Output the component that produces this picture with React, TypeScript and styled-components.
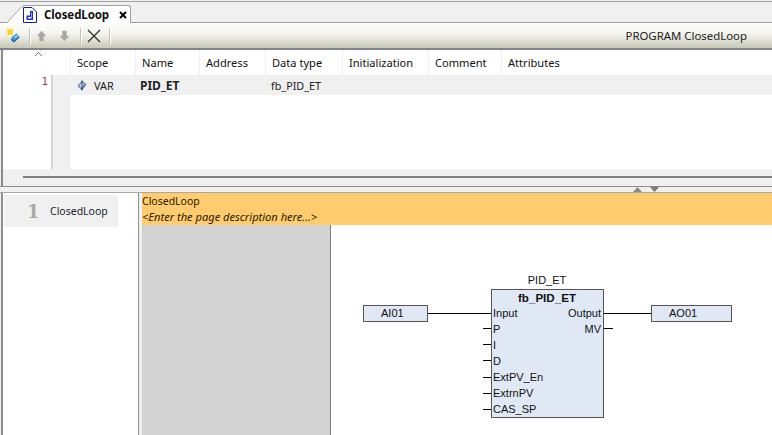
import React from "react";
import styled, { createGlobalStyle } from "styled-components";

const uiFont = `"Noto Sans", "DejaVu Sans", sans-serif`;
const fbdFont = `"Liberation Sans", Arial, sans-serif`;

const GlobalStyle = createGlobalStyle`
  html, body {
    margin: 0;
    padding: 0;
    background: #f0f0f0;
  }
  * {
    box-sizing: border-box;
  }
`;

const columns = [
  { label: "Scope", width: 65 },
  { label: "Name", width: 64 },
  { label: "Address", width: 66 },
  { label: "Data type", width: 77 },
  { label: "Initialization", width: 86 },
  { label: "Comment", width: 73 },
  { label: "Attributes", width: 271 },
];

const inputs = ["Input", "P", "I", "D", "ExtPV_En", "ExtrnPV", "CAS_SP"];
const outputs = ["Output", "MV"];

const Page = styled.div`
  width: 772px;
  height: 435px;
  display: flex;
  flex-direction: column;
  overflow: hidden;
  background: #f0f0f0;
  font-family: ${uiFont};
  font-size: 11.1px;
  color: #111;
`;

const TabStrip = styled.div`
  height: 22px;
  margin-top: 1px;
  padding-left: 7px;
  display: flex;
  align-items: flex-end;
  border-top: 1px solid #a0a0a0;
  border-bottom: 1px solid #a0a0a0;
  background: #f0f0f0;
`;

const TabSlant = styled.svg`
  display: block;
  margin-bottom: -1px;
`;

const Tab = styled.div`
  width: 108px;
  height: 18px;
  margin-bottom: -1px;
  display: flex;
  align-items: center;
  background: #fff;
  border-top: 1px solid #a0a0a0;
  border-right: 1px solid #a0a0a0;
  border-top-right-radius: 3px;
`;

const TabIcon = styled.svg`
  display: block;
  flex: none;
`;

const TabTitle = styled.span`
  margin-left: 7px;
  font-size: 11.5px;
  font-weight: 700;
  letter-spacing: -0.1px;
`;

const TabClose = styled.svg`
  margin-left: 10px;
`;

const Toolbar = styled.div`
  height: 27px;
  padding: 0 25px 0 6px;
  display: flex;
  align-items: center;
  background: linear-gradient(#fdfdfb 0%, #f3f3ee 45%, #c8c8b6 100%);
  border-bottom: 2px solid #82828e;
`;

const ToolIcon = styled.svg<{ $gap?: number }>`
  display: block;
  flex: none;
  margin-left: ${(p) => p.$gap ?? 0}px;
`;

const ToolSeparator = styled.div<{ $gap: number }>`
  width: 2px;
  height: 16px;
  margin-left: ${(p) => p.$gap}px;
  background: #c4c4b6;
  border-right: 1px solid #fff;
`;

const PouTitle = styled.span`
  margin-left: auto;
  font-size: 11.4px;
  color: #222;
`;

const Declaration = styled.div`
  height: 119px;
  display: flex;
  flex-direction: column;
  margin-left: 1px;
  border-left: 2px solid #8c8c8c;
  background: #fff;
`;

const HeaderRow = styled.div`
  height: 25px;
  padding-left: 67px;
  display: flex;
  position: relative;
`;

const SortMark = styled.svg`
  position: absolute;
  left: 31px;
  top: 1px;
`;

const HeaderCell = styled.div<{ $width: number }>`
  width: ${(p) => p.$width}px;
  flex: none;
  padding-left: 6px;
  display: flex;
  align-items: center;
  border-left: 1px solid #efefef;
  white-space: nowrap;
`;

const Body = styled.div`
  flex: 1;
  display: flex;
`;

const LineNumbers = styled.div`
  width: 48px;
  padding-top: 1px;
  padding-right: 3px;
  text-align: right;
  color: #a03050;
  font-family: "DejaVu Sans", sans-serif;
  font-size: 10px;
  line-height: 12px;
`;

const Rule = styled.div`
  width: 2px;
  background: #d4d4d4;
`;

const Rows = styled.div`
  flex: 1;
  display: flex;
  flex-direction: column;
`;

const DataRow = styled.div`
  height: 20px;
  display: flex;
  align-items: center;
  background: #f0f0f0;
`;

const Stripe = styled.div`
  flex: 1;
  width: 17px;
  background: #f0f0f0;
`;

const RowGutter = styled.div`
  width: 17px;
  flex: none;
`;

const DataCell = styled.div<{ $width: number; $bold?: boolean }>`
  width: ${(p) => p.$width}px;
  flex: none;
  padding-left: ${(p) => (p.$bold ? 4 : 7)}px;
  display: flex;
  align-items: center;
  gap: 7px;
  font-size: ${(p) => (p.$bold ? 12 : 10.8)}px;
  font-weight: ${(p) => (p.$bold ? 700 : 400)};
  color: #222;
  white-space: nowrap;
`;

const Splitter = styled.div`
  height: 17px;
  padding: 7px 0 0 20px;
  margin-left: 1px;
  border-left: 2px solid #8c8c8c;
  background: #f0f0f0;
  flex: none;
`;

const SplitterLine = styled.div`
  height: 2px;
  background: #808080;
`;

const Handle = styled.div`
  height: 7px;
  flex: none;
  padding-left: 633px;
  display: flex;
  align-items: flex-end;
  gap: 8px;
  border-top: 1px solid #8c8c8c;
  border-bottom: 1px solid #a8a8a8;
  background: #f0f0f0;
`;

const HandleMark = styled.svg`
  display: block;
`;

const Lower = styled.div`
  flex: 1;
  display: flex;
  margin-left: 1px;
  border-left: 2px solid #8c8c8c;
  min-height: 0;
`;

const PageList = styled.div`
  width: 136px;
  flex: none;
  padding: 2px 20px 0 1px;
  background: #fff;
  border-right: 1px solid #909090;
`;

const PageItem = styled.div`
  height: 32px;
  padding-left: 23px;
  display: flex;
  align-items: center;
  background: #f0f0f0;
`;

const PageNumber = styled.span`
  width: 23px;
  font-family: "DejaVu Serif", serif;
  font-size: 18px;
  font-weight: 700;
  color: #a8a8a8;
`;

const PageName = styled.span`
  font-size: 10.5px;
  color: #223;
`;

const Sheet = styled.div`
  flex: 1;
  margin-left: 3px;
  display: flex;
  flex-direction: column;
  background: #fff;
  min-width: 0;
`;

const SheetHeader = styled.div`
  height: 32px;
  flex: none;
  background: #fecb6e;
  color: #2b2000;
  line-height: 16px;
`;

const SheetTitle = styled.div`
  font-size: 10.5px;
`;

const SheetNote = styled.div`
  font-size: 11.1px;
  font-style: italic;
`;

const SheetBody = styled.div`
  flex: 1;
  display: flex;
`;

const SheetMargin = styled.div`
  width: 189px;
  flex: none;
  background: #d3d3d3;
  border-right: 1px solid #808080;
`;

const Canvas = styled.div`
  flex: 1;
  position: relative;
  background: #fff;
  font-family: ${fbdFont};
  font-size: 11px;
  color: #111;
`;

const VarBox = styled.div<{ $left: number; $width: number }>`
  position: absolute;
  left: ${(p) => p.$left}px;
  top: 80px;
  width: ${(p) => p.$width}px;
  height: 17px;
  padding-left: 17px;
  line-height: 14px;
  background: #e1e8f5;
  border: 1px solid #555;
`;

const Wire = styled.div<{ $left: number; $top: number; $width: number }>`
  position: absolute;
  left: ${(p) => p.$left}px;
  top: ${(p) => p.$top}px;
  width: ${(p) => p.$width}px;
  height: 1px;
  background: #000;
`;

const InstanceName = styled.div`
  position: absolute;
  left: 160px;
  top: 49px;
  width: 112px;
  text-align: center;
`;

const Block = styled.div`
  position: absolute;
  left: 160px;
  top: 64px;
  width: 113px;
  height: 129px;
  padding: 1px 2px 1px 1px;
  background: #e1e8f5;
  border: 1px solid #555;
`;

const BlockType = styled.div`
  height: 15px;
  line-height: 14px;
  text-align: center;
  font-size: 11.6px;
  font-weight: 700;
`;

const Pins = styled.div`
  display: flex;
  justify-content: space-between;
`;

const PinColumn = styled.div<{ $right?: boolean }>`
  display: flex;
  flex-direction: column;
  align-items: ${(p) => (p.$right ? "flex-end" : "flex-start")};
`;

const Pin = styled.div`
  height: 16px;
  line-height: 15px;
  white-space: nowrap;
`;

const App = () => {
  return (
    <>
      <GlobalStyle />
      <Page>
        <TabStrip>
          <TabSlant width="16" height="18" viewBox="0 0 16 18">
            <path d="M0 18 L16 1 V18 Z" fill="#fff" />
            <path d="M0 17.5 L15 1.5 L16 0.5" fill="none" stroke="#a8a8a8" />
          </TabSlant>
          <Tab>
            <TabIcon width="14" height="16" viewBox="0 0 14 16">
              <path d="M0.5 0.5 H9 L13.5 5 V15.5 H0.5 Z" fill="#fff" stroke="#1a1a8c" />
              <path d="M7 4 H10 V13 H3.5 V8.5 H7 Z M5 10 V11.5 H8.5 V5.5 H8 V10 Z" fill="#2030d8" />
            </TabIcon>
            <TabTitle>ClosedLoop</TabTitle>
            <TabClose width="8" height="8" viewBox="0 0 8 8">
              <path d="M1 1 L7 7 M7 1 L1 7" stroke="#000" strokeWidth="2" />
            </TabClose>
          </Tab>
        </TabStrip>

        <Toolbar>
          <ToolIcon width="14" height="15" viewBox="0 0 14 15">
            <path d="M6 9 L10.5 5.5 L13.5 9 L8 14 L5 11.5 Z" fill="#2f8fd8" />
            <path d="M5 11.5 L8 14 L13.5 9" fill="none" stroke="#0f4f90" />
            <path d="M8 9 L10.5 7 L12 8.5 L9 10.5 Z" fill="#a8d8f8" />
            <path d="M1 1 H7 V7 H1 Z" fill="#f6d02c" />
            <path d="M0 0 H2 V2 H0 Z M3 0 H5 V2 H3 Z M6 0 H8 V2 H6 Z M0 3 H2 V5 H0 Z M6 3 H8 V5 H6 Z M0 6 H2 V8 H0 Z M3 6 H5 V8 H3 Z M6 6 H8 V8 H6 Z" fill="#fbf0a0" />
          </ToolIcon>
          <ToolSeparator $gap={9} />
          <ToolIcon $gap={5} width="11" height="12" viewBox="0 0 11 12">
            <path d="M5.5 1 L10 6 H7.5 V11 H3.5 V6 H1 Z" fill="#a6a6a6" stroke="#b8b8b8" strokeWidth="0.6" />
          </ToolIcon>
          <ToolIcon $gap={12} width="11" height="12" viewBox="0 0 11 12">
            <path d="M3.5 1 H7.5 V6 H10 L5.5 11 L1 6 H3.5 Z" fill="#a6a6a6" stroke="#b8b8b8" strokeWidth="0.6" />
          </ToolIcon>
          <ToolSeparator $gap={10} />
          <ToolIcon $gap={5} width="14" height="14" viewBox="0 0 14 14">
            <path d="M1 1 L13 13 M13 1 L1 13" stroke="#333" strokeWidth="1.4" />
          </ToolIcon>
          <ToolSeparator $gap={8} />
          <PouTitle>PROGRAM ClosedLoop</PouTitle>
        </Toolbar>

        <Declaration>
          <HeaderRow>
            <SortMark width="9" height="6" viewBox="0 0 9 6">
              <path d="M1 5 L4.5 1.5 L8 5" fill="none" stroke="#666" />
            </SortMark>
            {columns.map((c) => (
              <HeaderCell key={c.label} $width={c.width}>
                {c.label}
              </HeaderCell>
            ))}
          </HeaderRow>
          <Body>
            <LineNumbers>1</LineNumbers>
            <Rule />
            <Rows>
              <DataRow>
                <RowGutter />
                <DataCell $width={66}>
                  <svg width="10" height="11" viewBox="0 0 10 11">
                    <path d="M5 0.5 L9.5 4.5 L5 10.5 L0.5 6 Z" fill="#5878b0" />
                    <path d="M5 2 L7.5 4.5 L4 8 L2 6 Z" fill="#c4d4ec" />
                    <path d="M5 0.5 L5 10.5" stroke="#20304c" strokeWidth="0.8" />
                  </svg>
                  VAR
                </DataCell>
                <DataCell $width={128} $bold>
                  PID_ET
                </DataCell>
                <DataCell $width={77}>fb_PID_ET</DataCell>
              </DataRow>
              <Stripe />
            </Rows>
          </Body>
        </Declaration>

        <Splitter>
          <SplitterLine />
        </Splitter>
        <Handle>
          <HandleMark width="9" height="5" viewBox="0 0 9 5">
            <path d="M4.5 0 L9 5 H0 Z" fill="#8a8a8a" />
          </HandleMark>
          <HandleMark width="9" height="5" viewBox="0 0 9 5">
            <path d="M0 0 H9 L4.5 5 Z" fill="#7a7a7a" />
          </HandleMark>
        </Handle>

        <Lower>
          <PageList>
            <PageItem>
              <PageNumber>1</PageNumber>
              <PageName>ClosedLoop</PageName>
            </PageItem>
          </PageList>
          <Sheet>
            <SheetHeader>
              <SheetTitle>ClosedLoop</SheetTitle>
              <SheetNote>&lt;Enter the page description here...&gt;</SheetNote>
            </SheetHeader>
            <SheetBody>
              <SheetMargin />
              <Canvas>
                <VarBox $left={32} $width={65}>AI01</VarBox>
                <Wire $left={97} $top={88} $width={63} />
                <InstanceName>PID_ET</InstanceName>
                <Block>
                  <BlockType>fb_PID_ET</BlockType>
                  <Pins>
                    <PinColumn>
                      {inputs.map((name) => (
                        <Pin key={name}>{name}</Pin>
                      ))}
                    </PinColumn>
                    <PinColumn $right>
                      {outputs.map((name) => (
                        <Pin key={name}>{name}</Pin>
                      ))}
                    </PinColumn>
                  </Pins>
                </Block>
                {[103, 119, 135, 152, 168, 184].map((top) => (
                  <Wire key={top} $left={152} $top={top} $width={8} />
                ))}
                <Wire $left={273} $top={88} $width={47} />
                <Wire $left={273} $top={103} $width={9} />
                <VarBox $left={320} $width={81}>AO01</VarBox>
              </Canvas>
            </SheetBody>
          </Sheet>
        </Lower>
      </Page>
    </>
  );
};

export default App;
